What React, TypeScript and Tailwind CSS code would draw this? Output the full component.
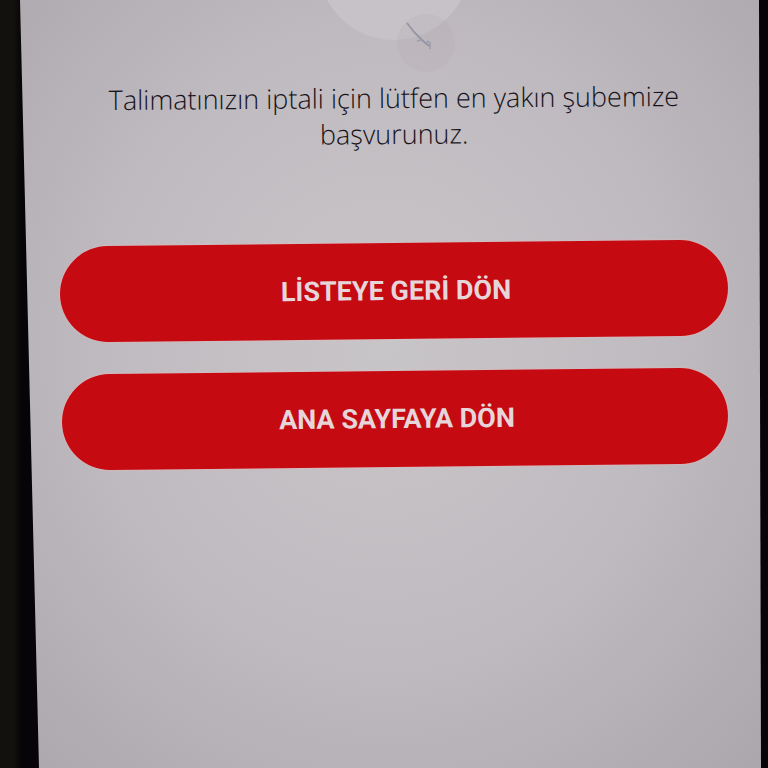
import React from "react";

const ActionButton = ({ label, className }: { label: string; className: string }) => {
  return (
    <button
      type="button"
      className={`h-24 -rotate-[0.6deg] rounded-full bg-[#c50a12] pl-1 font-[Roboto,sans-serif] text-[27px] leading-8 font-bold text-[#e6d6da] shadow-[0_0_2px_#efb6ba] ${className}`}
    >
      {label}
    </button>
  );
};

const StatusBadge = () => {
  return (
    <div className="relative -mt-28 size-38 rounded-full bg-[#c7c2c8]">
      <svg
        className="absolute top-28 left-16 h-20 w-24"
        viewBox="0 0 96 80"
        fill="none"
        aria-hidden="true"
      >
        <circle cx="44" cy="43" r="29" fill="#b3acb2" fillOpacity="0.25" />
        <path d="M25 23l7 9 8 8 7 6" stroke="#9496a4" strokeWidth="1.8" />
        <path d="M35 41l4-1M43 44l4-3M48 42v7" stroke="#9b9caa" strokeWidth="1.6" />
      </svg>
    </div>
  );
};

const App = () => {
  return (
    <div className="min-h-screen w-full bg-[linear-gradient(90deg,#12110d_0,#12110d_14px,#060407_22px)] font-['Open_Sans',sans-serif]">
      <main className="flex min-h-screen flex-col items-center overflow-hidden bg-[radial-gradient(ellipse_at_50%_45%,#c8c5c8_0%,#c0bbc0_50%,#aba6ab_100%)] pr-10 pl-15 [clip-path:polygon(20px_0,calc(100%-9px)_0,calc(100%-7px)_100%,39px_100%)]">
        <StatusBadge />
        <p className="mt-10 max-w-[600px] -rotate-[0.4deg] text-center text-[27px] leading-9 font-light text-[#17131a]">
          Talimatınızın iptali için lütfen en yakın şubemize başvurunuz.
        </p>
        <div className="mt-[91px] flex w-full flex-col gap-8">
          <ActionButton label="LİSTEYE GERİ DÖN" className="" />
          <ActionButton label="ANA SAYFAYA DÖN" className="ml-[2px]" />
        </div>
      </main>
    </div>
  );
};

export default App;
